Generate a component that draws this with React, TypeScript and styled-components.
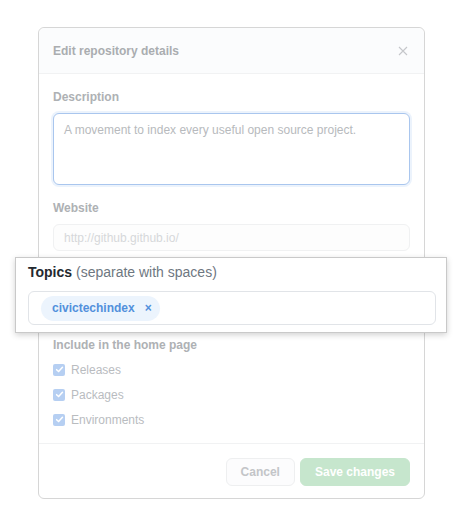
import React from "react";
import styled, { createGlobalStyle } from "styled-components";

const Global = createGlobalStyle`
  html, body { margin: 0; padding: 0; background: #ffffff; }
  body { font-family: "Liberation Sans", Arial, sans-serif; }
  * { box-sizing: border-box; }
`;

const Page = styled.div`
  width: 464px;
  height: 520px;
  padding: 27px 0 0 38px;
`;

const Dialog = styled.div`
  width: 387px;
  border: 1px solid #d6d6d6;
  border-radius: 6px;
  background: #ffffff;
  display: flex;
  flex-direction: column;
`;

const Header = styled.div`
  height: 46px;
  display: flex;
  align-items: center;
  justify-content: space-between;
  padding: 0 14px;
  background: #fbfcfd;
  border-bottom: 1px solid #f1f2f3;
  border-radius: 6px 6px 0 0;
`;

const Title = styled.div`
  font-size: 12px;
  font-weight: 700;
  color: #aaadb0;
`;

const CloseBtn = styled.div`
  width: 12px;
  height: 12px;
  display: flex;
  align-items: center;
  justify-content: center;
  margin-right: 1px;
`;

const Body = styled.div`
  padding: 16px 14px 11px;
  display: flex;
  flex-direction: column;
`;

const Field = styled.div<{ $gap?: number }>`
  display: flex;
  flex-direction: column;
  margin-bottom: ${(p) => p.$gap ?? 16}px;
  position: relative;
`;

const Label = styled.div<{ $mb?: number }>`
  font-size: 12px;
  line-height: 15px;
  font-weight: 700;
  color: #aeb1b4;
  margin-bottom: ${(p) => p.$mb ?? 8}px;
`;

const TextArea = styled.textarea`
  height: 72px;
  width: 100%;
  border: 1px solid #a9c6ee;
  border-radius: 6px;
  box-shadow: 0 0 0 2px rgba(9, 105, 218, 0.08);
  padding: 8px 10px;
  font-family: "Liberation Sans", Arial, sans-serif;
  font-size: 12px;
  line-height: 17px;
  color: #b5b8bb;
  resize: vertical;
  outline: none;
  background: #ffffff;
  &::placeholder { color: #b7babd; }
  &::-webkit-resizer { background: transparent; }
`;

const Input = styled.input`
  height: 27px;
  width: 100%;
  border: 1px solid #f0f1f2;
  border-radius: 6px;
  padding: 0 10px;
  font-family: "Liberation Sans", Arial, sans-serif;
  font-size: 12px;
  background: #fdfdfd;
  outline: none;
  &::placeholder { color: #d6d8da; }
`;

const TopicsSpacer = styled.div`
  height: 55px;
`;

const Callout = styled.div`
  position: absolute;
  left: -38px;
  top: -10px;
  width: 432px;
  height: 76px;
  background: #ffffff;
  border: 1px solid #c9c9c9;
  box-shadow: 0 2px 6px rgba(0, 0, 0, 0.18);
  padding: 6px 10px 0 12px;
  display: flex;
  flex-direction: column;
`;

const CalloutLabel = styled.div`
  font-size: 14px;
  line-height: 17px;
  color: #24292f;
  margin-bottom: 10px;
  b { font-weight: 700; }
  span { color: #6e7781; }
`;

const TopicBox = styled.div`
  height: 34px;
  border: 1px solid #e1e4e8;
  border-radius: 6px;
  display: flex;
  align-items: center;
  padding: 0 12px;
`;

const Chip = styled.div`
  height: 25px;
  border-radius: 13px;
  background: #ecf4fd;
  display: flex;
  align-items: center;
  padding: 0 8px 0 11px;
  gap: 10px;
  font-size: 12px;
  font-weight: 700;
  color: #5290dc;
`;

const ChipX = styled.span`
  font-size: 12px;
  font-weight: 700;
  color: #5290dc;
  line-height: 1;
`;

const CheckRow = styled.label`
  height: 25px;
  display: flex;
  align-items: center;
  gap: 6px;
  font-size: 12px;
  color: #b9bcbf;
`;

const Box = styled.span`
  width: 12px;
  height: 12px;
  border-radius: 2px;
  background: #b6cff2;
  display: flex;
  align-items: center;
  justify-content: center;
`;

const Footer = styled.div`
  border-top: 1px solid #f1f2f3;
  padding: 14px 14px 12px;
  display: flex;
  justify-content: flex-end;
  gap: 5px;
`;

const Button = styled.button<{ $primary?: boolean }>`
  height: 28px;
  padding: 0 14px;
  border-radius: 6px;
  font-family: "Liberation Sans", Arial, sans-serif;
  font-size: 12px;
  font-weight: 700;
  border: 1px solid ${(p) => (p.$primary ? "#c6e6cd" : "#eeeff0")};
  background: ${(p) => (p.$primary ? "#c6e6cd" : "#fcfcfd")};
  color: ${(p) => (p.$primary ? "#ffffff" : "#c3c5c8")};
`;

const Check = () => (
  <svg width="9" height="9" viewBox="0 0 10 10">
    <path d="M1.8 5.2 L4 7.3 L8.3 2.6" fill="none" stroke="#ffffff" strokeWidth="1.7" strokeLinecap="round" strokeLinejoin="round" />
  </svg>
);

export default function App() {
  return (
    <>
      <Global />
      <Page>
        <Dialog>
          <Header>
            <Title>Edit repository details</Title>
            <CloseBtn>
              <svg width="10" height="10" viewBox="0 0 10 10">
                <path d="M1 1 L9 9 M9 1 L1 9" stroke="#c5c7ca" strokeWidth="1.1" />
              </svg>
            </CloseBtn>
          </Header>
          <Body>
            <Field>
              <Label>Description</Label>
              <TextArea placeholder="A movement to index every useful open source project." />
            </Field>
            <Field>
              <Label>Website</Label>
              <Input placeholder="http://github.github.io/" />
            </Field>
            <Field>
              <TopicsSpacer />
              <Callout>
                <CalloutLabel>
                  <b>Topics</b> <span>(separate with spaces)</span>
                </CalloutLabel>
                <TopicBox>
                  <Chip>
                    civictechindex
                    <ChipX>×</ChipX>
                  </Chip>
                </TopicBox>
              </Callout>
            </Field>
            <Label $mb={4}>Include in the home page</Label>
            {["Releases", "Packages", "Environments"].map((t) => (
              <CheckRow key={t}>
                <Box>
                  <Check />
                </Box>
                {t}
              </CheckRow>
            ))}
          </Body>
          <Footer>
            <Button>Cancel</Button>
            <Button $primary>Save changes</Button>
          </Footer>
        </Dialog>
      </Page>
    </>
  );
}
